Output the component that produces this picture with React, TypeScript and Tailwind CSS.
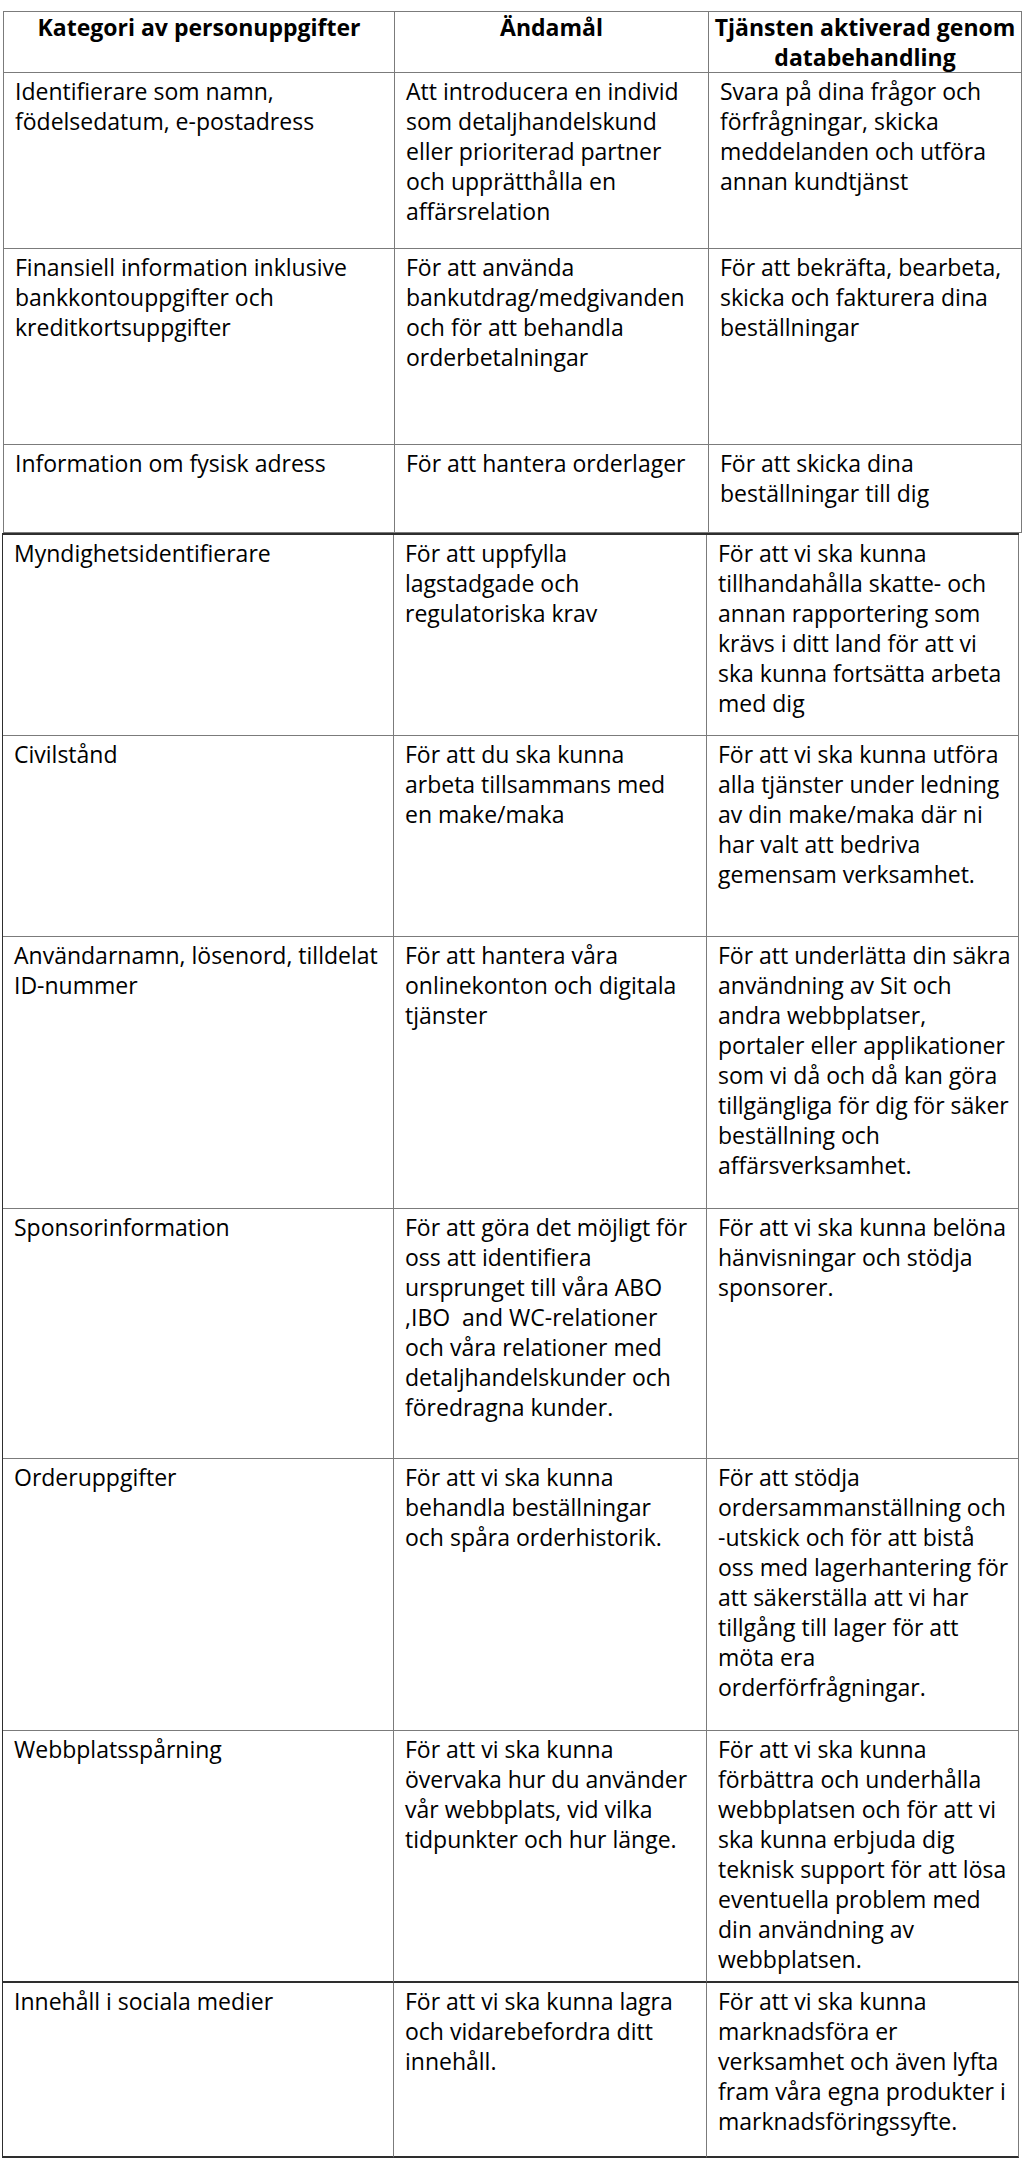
const font = { fontFamily: '"Open Sans", "Noto Sans", sans-serif' };

type Row = { c1: string[]; c2: string[]; c3: string[]; h: string; dark?: boolean };

const upperRows: Row[] = [
  {
    c1: ['Identifierare som namn,', 'födelsedatum, e-postadress'],
    c2: ['Att introducera en individ', 'som detaljhandelskund', 'eller prioriterad partner', 'och upprätthålla en', 'affärsrelation'],
    c3: ['Svara på dina frågor och', 'förfrågningar, skicka', 'meddelanden och utföra', 'annan kundtjänst'],
    h: 'h-[176px]',
  },
  {
    c1: ['Finansiell information inklusive', 'bankkontouppgifter och', 'kreditkortsuppgifter'],
    c2: ['För att använda', 'bankutdrag/medgivanden', 'och för att behandla', 'orderbetalningar'],
    c3: ['För att bekräfta, bearbeta,', 'skicka och fakturera dina', 'beställningar'],
    h: 'h-[196px]',
  },
  {
    c1: ['Information om fysisk adress'],
    c2: ['För att hantera orderlager'],
    c3: ['För att skicka dina', 'beställningar till dig'],
    h: 'h-[88px]',
  },
];

const lowerRows: Row[] = [
  {
    c1: ['Myndighetsidentifierare'],
    c2: ['För att uppfylla', 'lagstadgade och', 'regulatoriska krav'],
    c3: ['För att vi ska kunna', 'tillhandahålla skatte- och', 'annan rapportering som', 'krävs i ditt land för att vi', 'ska kunna fortsätta arbeta', 'med dig'],
    h: 'h-[201px]',
  },
  {
    c1: ['Civilstånd'],
    c2: ['För att du ska kunna', 'arbeta tillsammans med', 'en make/maka'],
    c3: ['För att vi ska kunna utföra', 'alla tjänster under ledning', 'av din make/maka där ni', 'har valt att bedriva', 'gemensam verksamhet.'],
    h: 'h-[201px]',
  },
  {
    c1: ['Användarnamn, lösenord, tilldelat', 'ID-nummer'],
    c2: ['För att hantera våra', 'onlinekonton och digitala', 'tjänster'],
    c3: ['För att underlätta din säkra', 'användning av Sit och', 'andra webbplatser,', 'portaler eller applikationer', 'som vi då och då kan göra', 'tillgängliga för dig för säker', 'beställning och', 'affärsverksamhet.'],
    h: 'h-[272px]',
  },
  {
    c1: ['Sponsorinformation'],
    c2: ['För att göra det möjligt för', 'oss att identifiera', 'ursprunget till våra ABO', ',IBO  and WC-relationer', 'och våra relationer med', 'detaljhandelskunder och', 'föredragna kunder.'],
    c3: ['För att vi ska kunna belöna', 'hänvisningar och stödja', 'sponsorer.'],
    h: 'h-[250px]',
  },
  {
    c1: ['Orderuppgifter'],
    c2: ['För att vi ska kunna', 'behandla beställningar', 'och spåra orderhistorik.'],
    c3: ['För att stödja', 'ordersammanställning och', '-utskick och för att bistå', 'oss med lagerhantering för', 'att säkerställa att vi har', 'tillgång till lager för att', 'möta era', 'orderförfrågningar.'],
    h: 'h-[272px]',
  },
  {
    c1: ['Webbplatsspårning'],
    c2: ['För att vi ska kunna', 'övervaka hur du använder', 'vår webbplats, vid vilka', 'tidpunkter och hur länge.'],
    c3: ['För att vi ska kunna', 'förbättra och underhålla', 'webbplatsen och för att vi', 'ska kunna erbjuda dig', 'teknisk support för att lösa', 'eventuella problem med', 'din användning av', 'webbplatsen.'],
    h: 'h-[252px]',
    dark: true,
  },
  {
    c1: ['Innehåll i sociala medier'],
    c2: ['För att vi ska kunna lagra', 'och vidarebefordra ditt', 'innehåll.'],
    c3: ['För att vi ska kunna', 'marknadsföra er', 'verksamhet och även lyfta', 'fram våra egna produkter i', 'marknadsföringssyfte.'],
    h: 'h-[175px]',
    dark: true,
  },
];

function Lines({ lines }: { lines: string[] }) {
  return (
    <>
      {lines.map((l, i) => (
        <div key={i} className="whitespace-pre">
          {l}
        </div>
      ))}
    </>
  );
}

function TableRow({ row, cols }: { row: Row; cols: string }) {
  const bottom = row.dark ? 'border-b-2 border-b-[#2e2e2e]' : 'border-b border-b-[#7b7b7b]';
  return (
    <div className={`grid ${cols} ${row.h}`}>
      <div className={`border-r border-[#7b7b7b] ${bottom} pl-[11px] pt-[3px]`}>
        <Lines lines={row.c1} />
      </div>
      <div className={`border-r border-[#7b7b7b] ${bottom} pl-[11px] pt-[3px]`}>
        <Lines lines={row.c2} />
      </div>
      <div className={`border-r border-[#7b7b7b] ${bottom} pl-[11px] pt-[3px]`}>
        <Lines lines={row.c3} />
      </div>
    </div>
  );
}

export default function App() {
  return (
    <div className="min-h-[2175px] bg-white pt-[11px] text-[23px] leading-[30px] text-black" style={font}>
      {/* upper table: header + first three rows */}
      <div className="ml-[3px] w-[1019px] border-l border-t border-[#7b7b7b]">
        <div className="grid h-[61px] grid-cols-[391px_314px_313px] font-bold">
          <div className="border-b border-r border-[#7b7b7b] text-center">Kategori av personuppgifter</div>
          <div className="border-b border-r border-[#7b7b7b] text-center">Ändamål</div>
          <div className="border-b border-r border-[#7b7b7b] text-center">
            <div>Tjänsten aktiverad genom</div>
            <div>databehandling</div>
          </div>
        </div>
        {upperRows.map((r, i) => (
          <TableRow key={i} row={r} cols="grid-cols-[391px_314px_313px]" />
        ))}
      </div>

      {/* lower table, slightly offset as in the source document */}
      <div className="ml-[2px] w-[1017px] border-l border-t-2 border-l-[#2e2e2e] border-t-[#2e2e2e]">
        {lowerRows.map((r, i) => (
          <TableRow key={i} row={r} cols="grid-cols-[391px_313px_312px]" />
        ))}
      </div>
    </div>
  );
}
